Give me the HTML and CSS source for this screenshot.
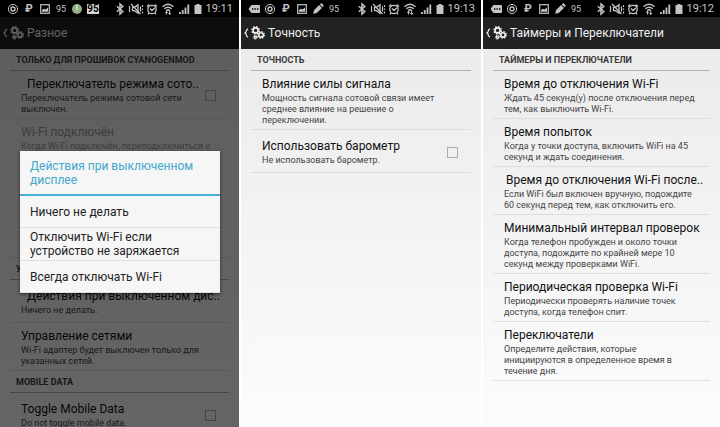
FILE: index.html
```
<!DOCTYPE html>
<html lang="ru">
<head>
    <meta charset="UTF-8">
    <meta name="viewport" content="width=device-width, initial-scale=1.0">
    <title>Настройки</title>
    <link rel="stylesheet" href="styles.css">
</head>
<body>

    <!-- Общие иконки -->
    <svg class="sprite" aria-hidden="true">
        <symbol id="i-record" viewBox="0 0 16 16">
            <circle cx="8" cy="8" r="4.6" fill="none" stroke="currentColor" stroke-width="1"/>
            <circle cx="8" cy="8" r="2" fill="none" stroke="currentColor" stroke-width="1.4"/>
        </symbol>
        <symbol id="i-image" viewBox="0 0 16 16">
            <rect x="3.7" y="3.7" width="8.6" height="8.6" fill="none" stroke="currentColor" stroke-width="1.2"/>
            <path d="M5 10.8V9l2-1.2 1.6.8L11 6.5v4.3z" fill="currentColor"/>
        </symbol>
        <symbol id="i-message" viewBox="0 0 16 16">
            <path d="M5.5 4.5h8v7h-8L3 8z" fill="currentColor" stroke="currentColor" stroke-width="1" stroke-linejoin="round"/>
            <path d="M6 8h1.4M8.5 8h1.4M11 8h1.4" stroke="#000" stroke-width="1.4"/>
        </symbol>
        <symbol id="i-pencil" viewBox="0 0 16 16">
            <path d="M3.2 12.8l.8-3.6L9.1 4.1l2.8 2.8-5.1 5.1zM9.8 3.4l1-.9q.6-.4 1.1.1l1.5 1.5q.5.5 0 1.1l-.9 1z" fill="currentColor"/>
        </symbol>
        <symbol id="i-bluetooth" viewBox="0 0 16 16">
            <path d="M4.8 5.3l6 5.2L8 13V3l2.8 2.5-6 5.2" fill="none" stroke="currentColor" stroke-width="1.5"/>
        </symbol>
        <symbol id="i-mute" viewBox="0 0 16 16">
            <path d="M4.5 6.3h2L10 3.7v8.6L6.5 9.7h-2z" fill="none" stroke="currentColor" stroke-width="1.3"/>
            <path d="M3 3l9.5 10M1.5 5v6M12.5 5.5v5M14.5 4v2M14.5 7.5v1.5M14.5 10.5v2" fill="none" stroke="currentColor" stroke-width="1.2"/>
        </symbol>
        <symbol id="i-alarm" viewBox="0 0 16 16">
            <circle cx="8" cy="8.5" r="4.2" fill="none" stroke="currentColor" stroke-width="1.3"/>
            <path d="M6 7.5l2 2 2.6-2.5M3 5.5L5.3 3.4M13 5.5l-2.3-2.1M5 12l-1 1.3M11 12l1 1.3" fill="none" stroke="currentColor" stroke-width="1.3"/>
        </symbol>
        <symbol id="i-wifi" viewBox="0 0 16 16">
            <path d="M2.5 5.8Q8 .8 13.5 5.8M4.3 7.8Q8 4.5 11.7 7.8M6.2 9.7Q8 8 9.8 9.7" fill="none" stroke="currentColor" stroke-width="1.4"/>
            <path d="M6.5 13.5v-3M5.2 11.8l1.3-1.5 1.3 1.5M9.7 10v3.4M8.4 12l1.3 1.5L11 12" fill="none" stroke="currentColor" stroke-width="1"/>
        </symbol>
        <symbol id="i-signal" viewBox="0 0 16 16">
            <path d="M3 11h1.8v2H3zM5.8 9h1.8v4H5.8zM8.6 6.5h1.8V13H8.6zM11.4 3.5h1.8V13h-1.8z" fill="currentColor"/>
        </symbol>
        <symbol id="i-battery" viewBox="0 0 12 16">
            <path d="M4.5 3h3v1h2v9h-7V4h2z" fill="currentColor"/>
        </symbol>
        <symbol id="i-gears" viewBox="0 0 14 14">
            <g fill="none" stroke="currentColor">
                <circle cx="4.6" cy="4.4" r="2.5" stroke-width="1.6"/>
                <circle cx="4.6" cy="4.4" r="3.7" stroke-width="1.4" stroke-dasharray="1.6 1.3"/>
                <circle cx="10" cy="8.9" r="2.2" stroke-width="1.6"/>
                <circle cx="10" cy="8.9" r="3.3" stroke-width="1.3" stroke-dasharray="1.4 1.19"/>
                <circle cx="4.3" cy="11.2" r="1.1" stroke-width="1.3"/>
                <circle cx="4.3" cy="11.2" r="2" stroke-width=".9" stroke-dasharray="1 .8"/>
            </g>
        </symbol>
        <symbol id="i-back" viewBox="0 0 5 10">
            <path d="M4 .8Q2 2 2 4L1 5l1 1q0 2 2 3.2" fill="none" stroke="currentColor" stroke-width="1.2"/>
        </symbol>
    </svg>

    <main class="screens">

        <!-- Разное -->
        <section class="screen">
            <div class="statusbar">
                <svg class="icon"><use href="#i-record"/></svg>
                <span class="slot ruble">₽</span>
                <svg class="icon"><use href="#i-image"/></svg>
                <span class="slot">95</span>
                <span class="slot"><span class="alert">!</span></span>
                <span class="slot"><span class="badge">95</span></span>
                <div class="system">
                    <svg class="icon"><use href="#i-bluetooth"/></svg>
                    <svg class="icon"><use href="#i-mute"/></svg>
                    <svg class="icon"><use href="#i-alarm"/></svg>
                    <svg class="icon"><use href="#i-wifi"/></svg>
                    <svg class="icon"><use href="#i-signal"/></svg>
                    <svg class="battery"><use href="#i-battery"/></svg>
                    <time>19:11</time>
                </div>
            </div>
            <div class="content">
                <header class="actionbar">
                    <button class="back" aria-label="Назад"><svg class="arrow"><use href="#i-back"/></svg><svg class="gears"><use href="#i-gears"/></svg></button>
                    <h1>Разное</h1>
                </header>
                <h2>ТОЛЬКО ДЛЯ ПРОШИВОК CYANOGENMOD</h2>
                <div class="item">
                    <label class="text" for="mode">
                        <span class="title cut">Переключатель режима сото..</span>
                        <span class="summary">Переключатель режима сотовой сети выключен.</span>
                    </label>
                    <input type="checkbox" id="mode">
                </div>
                <div class="item disabled covered">
                    <div class="text">
                        <span class="title">Wi-Fi подключён</span>
                        <span class="summary">Когда Wi-Fi подключён, переподключиться к</span>
                    </div>
                </div>
                <h2>У</h2>
                <div class="item">
                    <div class="text">
                        <span class="title cut">Действия при выключенном дис..</span>
                        <span class="summary">Ничего не делать.</span>
                    </div>
                </div>
                <div class="item">
                    <div class="text">
                        <span class="title">Управление сетями</span>
                        <span class="summary">Wi-Fi адаптер будет выключен только для указанных сетей.</span>
                    </div>
                </div>
                <h2>MOBILE DATA</h2>
                <div class="item">
                    <label class="text" for="mobile">
                        <span class="title">Toggle Mobile Data</span>
                        <span class="summary">Do not toggle mobile data.</span>
                    </label>
                    <input type="checkbox" id="mobile">
                </div>
                <div class="shade">
                    <div class="dialog" role="dialog" aria-labelledby="dialog-title">
                        <h3 id="dialog-title">Действия при выключенном дисплее</h3>
                        <button>Ничего не делать</button>
                        <button>Отключить Wi-Fi если устройство не заряжается</button>
                        <button>Всегда отключать Wi-Fi</button>
                    </div>
                </div>
            </div>
        </section>

        <!-- Точность -->
        <section class="screen">
            <div class="statusbar">
                <svg class="icon"><use href="#i-message"/></svg>
                <svg class="icon"><use href="#i-record"/></svg>
                <span class="slot ruble">₽</span>
                <svg class="icon"><use href="#i-image"/></svg>
                <svg class="icon"><use href="#i-pencil"/></svg>
                <span class="slot">95</span>
                <div class="system">
                    <svg class="icon"><use href="#i-bluetooth"/></svg>
                    <svg class="icon"><use href="#i-mute"/></svg>
                    <svg class="icon"><use href="#i-alarm"/></svg>
                    <svg class="icon"><use href="#i-wifi"/></svg>
                    <svg class="icon"><use href="#i-signal"/></svg>
                    <svg class="battery"><use href="#i-battery"/></svg>
                    <time>19:13</time>
                </div>
            </div>
            <div class="content">
                <header class="actionbar">
                    <button class="back" aria-label="Назад"><svg class="arrow"><use href="#i-back"/></svg><svg class="gears"><use href="#i-gears"/></svg></button>
                    <h1>Точность</h1>
                </header>
                <h2>ТОЧНОСТЬ</h2>
                <div class="item">
                    <div class="text">
                        <span class="title">Влияние силы сигнала</span>
                        <span class="summary">Мощность сигнала сотовой связи имеет среднее влияние на решение о переключении.</span>
                    </div>
                </div>
                <div class="item">
                    <label class="text" for="barometer">
                        <span class="title">Использовать барометр</span>
                        <span class="summary">Не использовать барометр.</span>
                    </label>
                    <input type="checkbox" id="barometer">
                </div>
            </div>
        </section>

        <!-- Таймеры и Переключатели -->
        <section class="screen">
            <div class="statusbar">
                <svg class="icon"><use href="#i-message"/></svg>
                <svg class="icon"><use href="#i-record"/></svg>
                <span class="slot ruble">₽</span>
                <svg class="icon"><use href="#i-image"/></svg>
                <svg class="icon"><use href="#i-pencil"/></svg>
                <span class="slot">95</span>
                <div class="system">
                    <svg class="icon"><use href="#i-bluetooth"/></svg>
                    <svg class="icon"><use href="#i-mute"/></svg>
                    <svg class="icon"><use href="#i-alarm"/></svg>
                    <svg class="icon"><use href="#i-wifi"/></svg>
                    <svg class="icon"><use href="#i-signal"/></svg>
                    <svg class="battery"><use href="#i-battery"/></svg>
                    <time>19:12</time>
                </div>
            </div>
            <div class="content">
                <header class="actionbar">
                    <button class="back" aria-label="Назад"><svg class="arrow"><use href="#i-back"/></svg><svg class="gears"><use href="#i-gears"/></svg></button>
                    <h1>Таймеры и Переключатели</h1>
                </header>
                <h2>ТАЙМЕРЫ И ПЕРЕКЛЮЧАТЕЛИ</h2>
                <div class="item">
                    <div class="text">
                        <span class="title">Время до отключения Wi-Fi</span>
                        <span class="summary">Ждать 45 секунд(у) после отключения перед тем, как выключить Wi-Fi.</span>
                    </div>
                </div>
                <div class="item">
                    <div class="text">
                        <span class="title">Время попыток</span>
                        <span class="summary">Когда у точки доступа, включить WiFi на 45 секунд и ждать соединения.</span>
                    </div>
                </div>
                <div class="item">
                    <div class="text">
                        <span class="title cut-small">Время до отключения Wi-Fi после..</span>
                        <span class="summary">Если WiFi был включен вручную, подождите 60 секунд перед тем, как отключить его.</span>
                    </div>
                </div>
                <div class="item">
                    <div class="text">
                        <span class="title">Минимальный интервал проверок</span>
                        <span class="summary">Когда телефон пробужден и около точки доступа, подождите по крайней мере 10 секунд между проверками WiFi.</span>
                    </div>
                </div>
                <div class="item">
                    <div class="text">
                        <span class="title">Периодическая проверка Wi-Fi</span>
                        <span class="summary">Периодически проверять наличие точек доступа, когда телефон спит.</span>
                    </div>
                </div>
                <div class="item">
                    <div class="text">
                        <span class="title">Переключатели</span>
                        <span class="summary">Определите действия, которые инициируются в определенное время в течение дня.</span>
                    </div>
                </div>
            </div>
        </section>

    </main>

</body>
</html>
```
FILE: styles.css
```
* {
    box-sizing: border-box;
}
body {
    margin: 0;
    font-family: Roboto, "Liberation Sans", sans-serif;
    background: #fff;
}
h1, h2, h3 {
    margin: 0;
}
button {
    margin: 0;
    border: 0;
    background: none;
    font: inherit;
    color: inherit;
    text-align: left;
}
.sprite {
    display: none;
}
.screens {
    display: grid;
    grid-template-columns: 239fr 240fr 237fr;
    gap: 2px;
    height: 100vh;
    overflow: hidden;
}
.screen {
    display: flex;
    flex-direction: column;
    min-width: 0;
    min-height: 0;
    background: linear-gradient(#e9e9e9, #fcfcfc);
}

/* Строка состояния */
.statusbar {
    display: flex;
    align-items: center;
    flex: none;
    height: 17px;
    padding: 0 6px 0 5px;
    background: #000;
    color: #c4c4c4;
    font-size: 9px;
}
.icon, .slot {
    width: 16px;
    height: 16px;
    flex: none;
}
.slot {
    display: flex;
    align-items: center;
    justify-content: center;
}
.ruble {
    font-size: 11px;
    font-weight: bold;
}
.alert {
    width: 10px;
    height: 10px;
    border-radius: 50%;
    background: #8fae84;
    color: #fff;
    line-height: 10px;
    text-align: center;
}
.badge {
    background: #d8d8d8;
    color: #000;
    font-size: 10px;
    font-weight: bold;
    line-height: 10px;
}
.system {
    display: flex;
    align-items: center;
    margin-left: auto;
}
.battery {
    width: 12px;
    height: 16px;
}
time {
    margin-left: 2px;
    font-size: 11px;
}

/* Заголовок экрана */
.content {
    position: relative;
    flex: 1;
    min-height: 0;
    overflow: hidden;
}
.actionbar {
    display: flex;
    align-items: center;
    height: 32px;
    background: #222;
    color: #f0f0f0;
}
.back {
    display: flex;
    align-items: center;
    gap: 2px;
    padding: 0 0 0 3px;
}
.arrow {
    width: 5px;
    height: 10px;
}
.gears {
    width: 14px;
    height: 14px;
}
h1 {
    padding-left: 3px;
    font-size: 12px;
    font-weight: normal;
    white-space: nowrap;
}

/* Список настроек */
h2 {
    height: 22px;
    margin: 0 10px;
    padding-left: 6px;
    border-bottom: 1px solid #b0b0b0;
    color: #3a3a3a;
    font-size: 9px;
    line-height: 22px;
    white-space: nowrap;
}
.item {
    display: flex;
    align-items: center;
    min-height: 43px;
    margin: 0 10px;
    padding: 5px 13px 3px 11px;
    border-bottom: 1px solid #dedede;
}
.text {
    flex: 1;
    min-width: 0;
}
.title, .summary {
    display: block;
}
.title {
    color: #111;
    font-size: 12px;
    line-height: 17px;
    white-space: nowrap;
}
.cut {
    padding-left: 6px;
}
.cut-small {
    padding-left: 2px;
}
.summary {
    color: #444;
    font-size: 9px;
    line-height: 11px;
}
.disabled .title, .disabled .summary {
    color: #999;
}
.covered {
    align-items: flex-start;
    height: 139px;
}
input[type="checkbox"] {
    appearance: none;
    width: 11px;
    height: 11px;
    margin: 0 0 0 6px;
    border: 1px solid #aaa;
}

/* Диалог поверх списка */
.shade {
    position: absolute;
    inset: 0;
    display: flex;
    align-items: center;
    padding: 0 19px 0 20px;
    background: rgba(0, 0, 0, 0.6);
}
.dialog {
    width: 100%;
    background: #f6f6f6;
    box-shadow: 0 1px 3px rgba(0, 0, 0, 0.6);
}
.dialog h3 {
    padding: 8px 10px 7px;
    border-bottom: 2px solid #4ab0d8;
    color: #42a8cc;
    font-size: 12px;
    font-weight: normal;
    line-height: 14px;
}
.dialog button {
    display: block;
    width: 100%;
    min-height: 32px;
    padding: 2px 10px;
    border-bottom: 1px solid #e0e0e0;
    color: #222;
    font-size: 12px;
    line-height: 14px;
}
```
